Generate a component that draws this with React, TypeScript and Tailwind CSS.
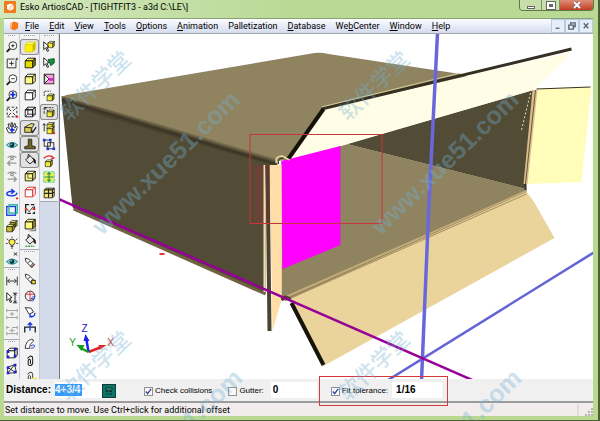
import React, { useState } from 'react';
import clsx from 'clsx';

interface Tool {
  label: string;
  icon: React.ReactNode;
  pressed?: boolean;
}

const Cube = ({ front = '#f4ec3a', top = '#fffb9a', side = '#a89c10', stroke = '#111', x = 0, y = 0, s = 1 }) => (
  <g transform={`translate(${x} ${y}) scale(${s})`} stroke={stroke} strokeLinejoin="round">
    <path d="M2.500 5.500 L5.500 2.500 H14 L11 5.500 Z" fill={top} />
    <path d="M11 5.500 L14 2.500 V10.500 L11 13.500 Z" fill={side} />
    <path d="M2.500 5.500 H11 V13.500 H2.500 Z" fill={front} />
  </g>
);

const Lens = ({ children }: { children?: React.ReactNode }) => (
  <g fill="none" stroke="#222">
    <circle cx="9" cy="6.500" r="4.500" fill="#fff" />
    <path d="M5.500 10 L2 13.500" strokeWidth="2.200" />
    {children}
  </g>
);

const Cursor = ({ x = 0, y = 0 }) => (
  <path
    transform={`translate(${x} ${y})`}
    d="M2 2 L8 7.500 L5.500 8 L7.500 12.500 L6 13 L4.200 9 L2 11 Z"
    fill="#fff"
    stroke="#111"
  />
);

const Pencil = ({ children }: { children?: React.ReactNode }) => (
  <g stroke="#222" fill="#fff">
    <path d="M2.500 2.500 L6.500 3.500 L13 10 L10 13 L3.500 6.500 Z" />
    <path d="M5.500 8 L8 5.500" fill="none" />
    <path d="M8.500 11.500 L11.500 8.500 L13 10 L10 13 Z" fill="#e9a0a0" />
    {children}
  </g>
);

const Eye = () => (
  <g>
    <path d="M1.500 8 Q8 2 14.500 8 Q8 14 1.500 8 Z" fill="#7fdde4" stroke="#167a88" />
    <circle cx="8" cy="8" r="2.800" fill="#10363c" />
    <circle cx="7" cy="7" r="0.800" fill="#fff" />
  </g>
);

const Bucket = () => (
  <g stroke="#111">
    <path d="M3 8 L8 3 L13 8 L8 12.500 Z" fill="#e8e8e8" />
    <path d="M8 3 L6 1.500 L5.500 6" fill="none" />
    <path d="M11 6 Q15 7 14 12 Q12 11 12.500 8.500" fill="#111" />
  </g>
);

const Corners = ({ color = '#2222cc' }) => (
  <g fill={color}>
    <rect x="2" y="5" width="3" height="3" />
    <rect x="10" y="2" width="3" height="3" />
    <rect x="2" y="11" width="3" height="3" />
    <rect x="10" y="10" width="3" height="3" />
  </g>
);

const viewTools: Tool[] = [
  { label: 'Zoom in', icon: <Lens><path d="M7 6.500 H11 M9 4.500 V8.500" /></Lens> },
  {
    label: 'Zoom to rectangle',
    icon: <g fill="none" stroke="#222"><path d="M11 3.500 H2.500 V13.500 H12.500 V5 M7.500 6 V11 M5 8.500 H10" /><path d="M12 3.500 H15 M13.500 2 V5" /></g>,
  },
  { label: 'Zoom out', icon: <Lens><path d="M7 6.500 H11" /></Lens> },
  {
    label: 'Zoom extents',
    icon: <Lens><path d="M9 3 V10 M6 6.500 H12" stroke="#1630e0" strokeWidth="2" /></Lens>,
  },
  {
    label: 'Fit to window',
    icon: (
      <g fill="none" stroke="#222">
        <rect x="2.500" y="2.500" width="11" height="11" strokeDasharray="3 2" />
        <path d="M4 4 L7 7 M12 4 L9 7 M4 12 L7 9 M12 12 L9 9" />
        <path d="M12 13.500 H15" stroke="#e22" strokeWidth="2" />
      </g>
    ),
  },
  {
    label: 'Pan',
    icon: (
      <g stroke="#222" fill="#fff">
        <path d="M4 13.500 L1.500 8 L3 7.500 L5 9 L3.500 3.500 L5 3 L7 7 V2 H8.500 L9 7 L11 2.500 L12.200 3.500 L11 8 L13.500 6 L14 7.500 L11.500 13.500 Z" />
        <path d="M8 7 V13 M5.500 10 H11" stroke="#1630e0" strokeWidth="2" />
      </g>
    ),
  },
  { label: 'View mode', icon: <Eye /> },
  {
    label: 'Previous view',
    icon: <g fill="none" stroke="#999" strokeWidth="1.500"><path d="M3 4 Q8 1 13 4" /><circle cx="8" cy="5" r="1.500" /><path d="M13 10.500 H3 M6 7.500 L3 10.500 L6 13.500" /></g>,
  },
  {
    label: 'Next view',
    icon: <g fill="none" stroke="#999" strokeWidth="1.500"><path d="M3 4 Q8 1 13 4" /><circle cx="8" cy="5" r="1.500" /><path d="M3 10.500 H13 M10 7.500 L13 10.500 L10 13.500" /></g>,
  },
  {
    label: 'Rotate view',
    icon: (
      <g fill="none" stroke="#1a38e0" strokeWidth="1.600">
        <path d="M10 5 Q2 4.500 2 8 Q3 10.500 9 10 Q14 9.500 13.500 6.500" />
        <path d="M7 2.500 L10.500 5 L7 7.500" />
        <path d="M12.500 13 H15" stroke="#e22" strokeWidth="2" />
      </g>
    ),
  },
  {
    label: 'Clipping plane',
    icon: (
      <g fill="none" strokeWidth="1.500">
        <rect x="2" y="4" width="10" height="10" stroke="#1a38e0" />
        <rect x="4.500" y="2" width="9.500" height="9.500" stroke="#1cb5a0" />
      </g>
    ),
  },
  { label: 'Stack', icon: <g><Cube x={4} y={0} s={0.7} front="#9c9430" /><Cube x={0} y={4.500} s={0.75} front="#c9bb35" /></g> },
  {
    label: 'Lights',
    icon: (
      <g stroke="#222" fill="#ffe948">
        <path d="M8 0.500 V2 M2 3 L4 5 M14 3 L12 5 M1 8.500 H3 M13 8.500 H15" />
        <path d="M8 3.500 Q12 3.500 11.500 7.500 L9.500 10.500 H6.500 L4.500 7.500 Q4 3.500 8 3.500 Z" />
        <path d="M6.500 12 H9.500 M7 13.800 H9" />
      </g>
    ),
  },
  { label: 'Hide', icon: <g><g transform="translate(0 3)"><Eye /></g><path d="M10 0.500 L14 4 M14 0.500 L10 4" stroke="#222" /></g> },
];

const dimensionTools: Tool[] = [
  { label: 'Distance dimension', icon: <path d="M2 3 V13 M14 3 V13 M3 8 H13 M5.500 5.500 L3 8 L5.500 10.500 M10.500 5.500 L13 8 L10.500 10.500" fill="none" stroke="#222" /> },
  { label: 'Select dimension', icon: <g><Cursor /><path d="M9 2.500 H14 M9 13.500 H14 M11.500 3 V13 M10 5 L11.500 3 L13 5 M10 11 L11.500 13 L13 11" fill="none" stroke="#222" /></g> },
  { label: 'Move dimension', icon: <path d="M2 4 H14 M2 12 H14 M2 2 V6 M14 2 V6 M2 10 V14 M14 10 V14 M8 5.500 V10.500 M5.500 8 H10.500" fill="none" stroke="#999" /> },
  { label: 'Extend dimension', icon: <path d="M2 4 H5 M8 4 H14 M2 11 H14 M2 2 V6 M14 2 V6 M2 9 V13 M14 9 V13 M5 7.500 H11 M8 5 V10" fill="none" stroke="#999" /> },
];

const selectTools: Tool[] = [
  { label: 'Select solid', icon: <g><Cube front="#fff" top="#fff" side="#ddd" /><Corners /></g> },
  { label: 'Select edges', icon: <g><path d="M3 6 L11 3 L13 12 L3 13 Z M3 6 L12 12 M11 3 L3 13" fill="none" stroke="#222" /><Corners /></g> },
  { label: 'Select part', icon: <path d="M3 5 L7 3 L9 6 L14 3 M3 5 V13" fill="none" stroke="#d22" strokeWidth="2" /> },
];

const modeTools: Tool[] = [
  { label: 'Solid', icon: <Cube stroke="#e0d400" front="#fff200" top="#fff980" side="#c0b400" />, pressed: true },
  { label: 'Solid with edges', icon: <Cube front="#e6dc00" top="#f8f25a" side="#8a8200" /> },
  { label: 'Hidden line', icon: <Cube front="#fffb80" top="#fffdb5" side="#fff27a" /> },
  { label: 'White solid', icon: <Cube front="#fff" top="#fff" side="#fff" /> },
  { label: 'Wireframe', icon: <g><Cube front="none" top="none" side="none" /><path d="M5.500 2.500 V10.500 H14 M5.500 10.500 L2.500 13.500" fill="none" stroke="#222" /></g> },
  {
    label: 'Open box',
    icon: (
      <g stroke="#222">
        <path d="M2 7 L9 3 L13 3.500 L10 8 Z" fill="#e9df68" />
        <path d="M2 7 L10 8 V13 H2 Z" fill="#d8cc50" />
        <path d="M9 10 L11 13 L15 7" fill="none" strokeWidth="1.500" />
      </g>
    ),
    pressed: true,
  },
  { label: 'Show thickness', icon: <path d="M6 2.500 H10 V10 L14 11 V13.500 H2 V11 L6 10 Z" fill="#6d6422" stroke="#222" />, pressed: true },
  { label: 'Fill', icon: <Bucket />, pressed: true },
  { label: 'Yellow wire', icon: <g><Cube front="#fffb80" top="#fffdb5" side="#fff27a" /><path d="M5.500 2.500 V10.500 H14" fill="none" stroke="#555" /></g> },
  { label: 'Red wire', icon: <g><Cube front="#fff" top="#fff" side="#fff" stroke="#d42020" /></g> },
  {
    label: 'Inside outside',
    icon: <g fill="none" stroke="#222"><path d="M3 3 H13 V13 H3 Z" strokeDasharray="4 2" strokeWidth="1.500" /><path d="M4 8 L7 11 L12 5" /><path d="M2 8 H5 M11 8 H14" stroke="#d22" strokeWidth="2" /></g>,
  },
  { label: 'Shadow', icon: <g><path d="M5 15 L15 15 V7 L13 13 Z" fill="#888" /><Cube y={-1} front="#fffb80" /></g> },
  { label: 'Paint', icon: <g><g transform="translate(0 -1)"><Bucket /></g><path d="M3 14 H13" stroke="#3ba43b" strokeWidth="1.500" strokeDasharray="2 1" /></g> },
];

const annotateTools: Tool[] = [
  { label: 'Draw', icon: <Pencil /> },
  { label: 'Draw on surface', icon: <Pencil><rect x="10" y="9.500" width="4" height="4" fill="#f5e629" /></Pencil> },
  { label: 'Globe', icon: <g fill="none" stroke="#222"><circle cx="8" cy="8" r="5.500" /><path d="M8 2.500 V13 M3 6 H13" stroke="#d22" /><path d="M9 12 Q10 8 14 9 M9 11 H13 L11 14" stroke="#1a38e0" /></g> },
  { label: 'Revolve', icon: <g fill="none" stroke="#222"><path d="M2.500 3 L9 3.500 L12 8 L7 10.500 Z" fill="#fff" /><path d="M8 13 Q14 14 13.500 9 M8 10 V13.500 H11" stroke="#1a38e0" strokeWidth="1.500" /></g> },
  { label: 'Extrude', icon: <g fill="none" stroke="#222" strokeWidth="1.500"><path d="M2 13 V7 H14 V13" /><path d="M8 11 V2 M5.500 4.500 L8 2 L10.500 4.500" stroke="#1a38e0" /></g> },
  { label: 'Sweep', icon: <g fill="none" stroke="#222"><path d="M2.500 13 Q3 4 10 2.500 Q13 3 11.500 5 Q7 8 7.500 13 Z" fill="#fff" /><path d="M9 10 Q12 8 13.500 10 Q13 13 9 13" stroke="#1a38e0" /></g> },
  { label: 'Attach', icon: <path d="M5 5 L8 2.500 Q11 2 11 5 V11 Q9 14.500 6 12.500 V7 Q7.500 5 8.500 7 V11" fill="none" stroke="#222" strokeWidth="1.200" /> },
  { label: 'Attach new', icon: <g><path d="M5 5 L8 2.500 Q11 2 11 5 V11 Q9 14.500 6 12.500 V7 Q7.500 5 8.500 7 V11" fill="none" stroke="#222" /><path d="M10 9 L15 14 M15 9 L10 14" stroke="#f2dc18" strokeWidth="2" /></g> },
];

const moveTools: Tool[] = [
  { label: 'Select item', icon: <g><Cube x={5} y={0} s={0.65} /><Cursor /></g> },
  { label: 'Select face', icon: <g><path d="M7 4 L14 3 V8 L10 11 Z" fill="#158b3d" stroke="#0c5a25" /><Cursor /></g> },
  { label: 'Designs', icon: <g><rect x="2.500" y="2.500" width="11" height="11" fill="#f4a3dd" stroke="#222" /><path d="M3 3 L8 8 L3 13 Z" fill="#eaf7e0" stroke="#222" /><rect x="8" y="7" width="5" height="3" fill="#e31bd0" /></g> },
  { label: 'Duplicate', icon: <g><path d="M2.500 8 V2.500 H10" fill="none" stroke="#222" strokeDasharray="2 1" /><Cube x={4} y={4} s={0.7} /></g> },
  { label: 'Move', icon: <g><path d="M2.500 10 V3 H13 M2.500 3 L7 7 M2.500 3 H5" fill="none" stroke="#222" strokeDasharray="3 1" /><Cube x={4} y={4} s={0.7} /></g>, pressed: true },
  { label: 'Move to point', icon: <g><Cube x={4} y={0} s={0.7} /><Cube x={4} y={5} s={0.7} /><path d="M2.500 3 V12 M1 5 L2.500 3 L4 5" fill="none" stroke="#222" /><path d="M12 14 H15" stroke="#d22" strokeWidth="2" /></g> },
  { label: 'Align', icon: <g fill="none" stroke="#222"><rect x="2.500" y="3.500" width="7" height="7" /><rect x="6.500" y="6.500" width="7" height="7" /><g fill="#1a38e0" stroke="none"><rect x="1" y="2" width="3" height="3" /><rect x="8" y="2" width="3" height="3" /><rect x="12" y="12" width="3" height="3" /><rect x="5" y="12" width="3" height="3" /></g></g> },
  { label: 'Rotate item', icon: <g><Cube x={2} y={5} s={0.7} /><path d="M2 5 Q7 0 13 4 M10 2 L13.500 4.500 L10 6" fill="none" stroke="#d22" strokeWidth="1.500" /></g> },
  { label: 'Scale', icon: <g><rect x="2" y="2" width="12" height="12" fill="#f2ec5a" stroke="#22c9c2" strokeDasharray="3 1" /><path d="M8 3 V13 M3 8 H13 M6 5 L8 3 L10 5 M6 11 L8 13 L10 11" fill="none" stroke="#168f4a" strokeWidth="1.200" /></g> },
  { label: 'Array', icon: <g fill="#f4ec70" stroke="#222"><path d="M2.500 4.500 L4.500 2.500 H14 V11.500 L12 13.500 H2.500 Z" /><path d="M7.500 3 V13 M2.500 8.500 H12 L14 7 M12 4.500 V13 M2.500 4.500 H12 L14 2.500" strokeWidth="1.300" fill="none" /></g> },
];

const Grip = () => <div className="mx-1 h-1 shrink-0 border-t border-dotted border-[#9ba7bd]" />;

const ToolGroup = ({ tools, className }: { tools: Tool[]; className?: string }) => (
  <div className="shrink-0 border-b border-[#a5a9b5] bg-[#f3f3f3] pt-px">
    <Grip />
    <div className={clsx('flex flex-col items-stretch justify-between', className)}>
      {tools.map(tool => (
        <button
          key={tool.label}
          type="button"
          aria-label={tool.label}
          aria-pressed={tool.pressed}
          className={clsx(
            'flex h-4 shrink-0 items-center justify-center',
            tool.pressed && 'rounded-[3px] bg-[#e2e2e2] ring-1 ring-inset ring-[#8c8c8c]'
          )}
        >
          <svg viewBox="0 0 16 16" className="size-3.5" aria-hidden="true">
            {tool.icon}
          </svg>
        </button>
      ))}
    </div>
  </div>
);

const menus = [
  ['', 'F', 'ile'],
  ['', 'E', 'dit'],
  ['', 'V', 'iew'],
  ['', 'T', 'ools'],
  ['', 'O', 'ptions'],
  ['', 'A', 'nimation'],
  ['Palletization', '', ''],
  ['', 'D', 'atabase'],
  ['We', 'b', 'Center'],
  ['', 'W', 'indow'],
  ['', 'H', 'elp'],
];

const Logo = ({ className }: { className?: string }) => (
  <svg viewBox="0 0 12 12" className={className} aria-hidden="true">
    <rect width="12" height="12" rx="1" fill="#f47a1c" />
    <path d="M3 4 L6.500 2.500 L9.500 4 V8 L6 9.800 L3 8 Z" fill="#fff" />
    <path d="M6 6 L9 4.500 M6 6 V9" stroke="#f9b27c" fill="none" />
  </svg>
);

const MdiLogo = () => (
  <svg viewBox="0 0 12 12" className="size-2.5" aria-hidden="true">
    <path d="M1.500 3 L6 0.500 L11 2.500 V8.500 L6.500 11.500 L1.500 9 Z" fill="#f47a1c" />
    <path d="M1.500 3 L4 2 L3 8 L1.500 9 Z" fill="#ffc18f" />
  </svg>
);

const Scene = () => (
  <svg
    viewBox="59 34 534 345"
    preserveAspectRatio="xMidYMid slice"
    className="size-full"
    role="img"
    aria-label="Folded box with tight fit flap"
  >
    <defs>
      <linearGradient id="ridge" gradientUnits="userSpaceOnUse" x1="168" y1="126" x2="165" y2="136">
        <stop offset="0" stopColor="#8f8360" />
        <stop offset="0.500" stopColor="#3b3424" />
        <stop offset="1" stopColor="#524b36" />
      </linearGradient>
      <linearGradient id="shade" x1="0" x2="1" y1="0" y2="0">
        <stop offset="0" stopColor="#524b36" />
        <stop offset="0.500" stopColor="#6b4238" />
        <stop offset="1" stopColor="#6b4238" />
      </linearGradient>
    </defs>
    <path d="M61 97 L66 95 L314 53 Q320 52 328 54 L460 74 L470 78 L323 112 L287 160 L276 161 Z" fill="#8f8360" />
    <path d="M61 99 L277 161 V165 H265 V294 L75 211 L72 207 Z" fill="#524b36" />
    <path d="M61 96 L275 157 L275 166 L62 105 Z" fill="url(#ridge)" />
    <path d="M73 209 L265 294" stroke="#716342" strokeWidth="3" />
    <path d="M346 144 L533 90 L525 189 Z" fill="#524b36" />
    <path d="M281 161 L347 144 L526 189 L526 193 L290 300 H281 Z" fill="#8f8360" />
    <path d="M288 299 L526 192 L533 201 L554 238 L323 366 Z" fill="#ead49c" />
    <path d="M283 298 L526 191" stroke="#c4ab76" strokeWidth="2" />
    <path d="M284 301 L526 194" stroke="#a38c5d" />
    <path d="M536 89 L591 87 L581 182 L527 184 Z" fill="#fffdb9" />
    <path d="M532 90 H537 L527 184 H523 Z" fill="#d9bd8b" />
    <path d="M535 90 L525 184" stroke="#685a40" />
    <path d="M536 89 L590 87" stroke="#38311f" />
    <path d="M530 93 L521 130" stroke="#e9e0ad" strokeDasharray="2 2" />
    <path d="M525 184 V190" stroke="#38311f" strokeWidth="2" />
    <path d="M285 161 L323 109 L568 53 L568 57 L533 90 L320 152 Z" fill="#fffde6" />
    <path d="M321 109 L571 49" stroke="#363022" strokeWidth="3" />
    <path d="M287 160 L323 109" stroke="#151309" strokeWidth="4" />
    <path d="M321 107 L460 73" stroke="#d6cc9a" strokeWidth="1" />
    <path d="M281 161 L340 146 V245 L282 269 Z" fill="#ff00ff" />
    <path d="M250 165 H263 V224 H250 Z" fill="url(#shade)" />
    <path d="M269 165 H281 V300 L272 331 Z" fill="#ffdda6" />
    <path d="M263 165 H265 V292 H263 Z" fill="#f4dcaa" />
    <path d="M265 165 H269 L271 331 H267 Z" fill="#4b4230" />
    <path d="M265 165 H269 V224 H266 Z" fill="#5f3a31" />
    <path d="M276 163 Q274 156 282 156 L289 160" fill="none" stroke="#e7dca8" strokeWidth="1.500" />
    <path d="M278 164 Q277 158 283 158" fill="none" stroke="#2b2516" />
    <path d="M281 300 L285 297 L290 299" fill="none" stroke="#4b4230" strokeWidth="3" />
    <path d="M291 303 L323 365" stroke="#17140a" strokeWidth="4" />
    <path d="M437 33 L428 214 L421 381" fill="none" stroke="#6868dc" strokeWidth="3.500" />
    <path d="M594 252 L386 381" stroke="#6464d6" strokeWidth="2.500" />
    <path d="M58 199 L474 381" stroke="#960096" strokeWidth="2.500" />
    <rect x="249.500" y="134.500" width="132" height="89" fill="none" stroke="#c8353b" />
    <rect x="159" y="253" width="5" height="2" fill="#e33a3a" />
    <g strokeWidth="2.500">
      <path d="M88 352 L101 347" stroke="#dd2222" />
      <path d="M98 345 L106 345 L99 350 Z" fill="#dd2222" />
      <path d="M88 352 L86 340" stroke="#2020ee" />
      <path d="M83 341 L85 334 L89 341 Z" fill="#2020ee" />
      <path d="M88 352 L80 348" stroke="#12a012" />
      <path d="M76 345 L84 345 L81 351 Z" fill="#12a012" />
    </g>
    <g className="font-['Liberation_Sans',sans-serif] text-[10px]" textAnchor="middle">
      <text x="110" y="346" fill="#dd2222">X</text>
      <text x="84" y="332" fill="#2020cc">Z</text>
      <text x="72" y="346" fill="#12a012">Y</text>
    </g>
  </svg>
);

const Mark = ({ x, y, text, className }: { x: number; y: number; text: string; className: string }) => (
  <text transform={`translate(${x} ${y}) rotate(-44)`} className={className}>{text}</text>
);

const hanzi = 'text-[22px] font-medium';
const address = 'text-[25px] font-bold';

const CheckOption = ({ label, defaultChecked = false }: { label: string; defaultChecked?: boolean }) => {
  const [checked, setChecked] = useState(defaultChecked);
  return (
    <label className="flex items-center gap-0.5 pt-0.5 text-[8px] leading-3 whitespace-nowrap">
      <span className="grid size-[9px] place-items-center border border-[#8e9297] bg-[#f8f8f8]">
        <input
          type="checkbox"
          checked={checked}
          onChange={e => setChecked(e.target.checked)}
          className="peer col-start-1 row-start-1 size-full appearance-none"
        />
        <svg viewBox="0 0 8 8" className="pointer-events-none invisible col-start-1 row-start-1 size-[7px] peer-checked:visible" aria-hidden="true">
          <path d="M1 4 L3 6.500 L7 1" fill="none" stroke="#33459a" strokeWidth="1.500" />
        </svg>
      </span>
      {label}
    </label>
  );
};

const fieldClass = 'h-4 min-w-0 bg-white text-[10px] font-bold leading-4 outline-none';

export default function App() {
  return (
    <div className="relative flex h-screen flex-col overflow-hidden border-r-2 border-b border-[#4c5f39] bg-[#b8d98f] font-['Liberation_Sans',sans-serif] text-black">
      <header className="flex h-[18px] shrink-0 items-start justify-between bg-linear-to-r from-[#d4e8bd] via-[#b9d995] to-[#b9d995] pl-1">
        <h1 className="flex items-center gap-1 pt-px font-['Roboto',sans-serif] text-[9px] leading-3">
          <Logo className="size-3" />
          Esko ArtiosCAD - [TIGHTFIT3 - a3d C:\LE\]
        </h1>
        <div className="mr-1 flex h-[11px] overflow-hidden rounded-b-sm border border-t-0 border-[#61794a]">
          <button type="button" aria-label="Minimize" className="grid w-[22px] place-items-center border-r border-[#7c9463] bg-[#c6dfab]">
            <span className="mt-1 h-[3px] w-2 border border-[#666] bg-white" />
          </button>
          <button type="button" aria-label="Maximize" className="grid w-[18px] place-items-center border-r border-[#7c9463] bg-[#c6dfab]">
            <span className="h-[7px] w-2 border-2 border-white bg-[#666] ring-1 ring-[#666]" />
          </button>
          <button type="button" aria-label="Close" className="grid w-[33px] place-items-center bg-linear-to-b from-[#de8c78] to-[#c13b1c]">
            <svg viewBox="0 0 10 8" className="h-2 w-2.5" aria-hidden="true">
              <path d="M2 1 L8 7 M8 1 L2 7" stroke="#666" strokeWidth="3" />
              <path d="M2 1 L8 7 M8 1 L2 7" stroke="#fff" strokeWidth="1.800" />
            </svg>
          </button>
        </div>
      </header>

      <div className="mr-[5px] mb-1 ml-1 flex min-h-0 flex-1 flex-col bg-[#f0f0f0]">
        <nav className="flex h-[15px] shrink-0 items-center border-t border-[#8ba374] bg-linear-to-b from-[#fbfcfe] to-[#d5dcef] pl-[5px] font-['Roboto',sans-serif] text-[9px] leading-3">
          <MdiLogo />
          <div className="ml-1.5 flex flex-1 gap-2.5">
            {menus.map(([before, key, after]) => (
              <button key={before + key + after} type="button">
                {before}
                <span className="underline">{key}</span>
                {after}
              </button>
            ))}
          </div>
          <div className="flex h-full">
            {[
              ['Minimize drawing', 'M3 8 H7'],
              ['Restore drawing', 'M4 4 V2 H9 V6 H7 M2 4.500 H7 V9 H2 Z'],
              ['Close drawing', 'M3 2.500 L8 8 M8 2.500 L3 8'],
            ].map(([label, d]) => (
              <button key={label} type="button" aria-label={label} className="grid w-3.5 place-items-center border border-[#b9cbe0] bg-[#e4edf8]">
                <svg viewBox="0 0 11 11" className="size-2.5" aria-hidden="true">
                  <path d={d} fill="none" stroke="#5c6470" strokeWidth="1.500" />
                </svg>
              </button>
            ))}
          </div>
        </nav>

        <main className="flex min-h-0 flex-1 border-t border-[#a3a7ac]">
          <aside className="flex w-[55px] shrink-0 bg-[#d3daea]">
            <div className="flex w-4 flex-col overflow-hidden border-r border-[#c5c9d2] bg-[#f3f3f3]">
              <ToolGroup tools={viewTools} className="h-[228px]" />
              <ToolGroup tools={dimensionTools} className="h-[66px]" />
              <ToolGroup tools={selectTools} className="h-12" />
            </div>
            <div className="flex w-5 flex-col overflow-hidden border-r border-[#c5c9d2] bg-[#f3f3f3]">
              <ToolGroup tools={modeTools} className="h-[210px]" />
              <ToolGroup tools={annotateTools} className="h-[130px]" />
            </div>
            <div className="w-[18px]">
              <ToolGroup tools={moveTools} className="h-[162px]" />
            </div>
          </aside>
          <div className="min-w-0 flex-1 overflow-hidden border-l border-[#777] bg-white">
            <Scene />
          </div>
        </main>

        <form className="flex h-[22px] shrink-0 items-center pl-0.5">
          <label htmlFor="distance" className="text-[10px] leading-4 font-bold">Distance:</label>
          <div className="ml-1 flex h-4 w-12 items-center bg-white">
            <input id="distance" defaultValue="4+3/4" className="h-3 w-[27px] bg-[#3399ff] text-[10px] leading-3 font-bold text-white outline-none" />
          </div>
          <button type="button" aria-label="Calculator" className="mt-0.5 size-3 bg-[#0a7468] ring-1 ring-[#173b37]">
            <svg viewBox="0 0 12 12" aria-hidden="true">
              <path d="M3 3 H9 V5 H3 Z M3 6.500 H5 M6 6.500 H9 M3 9 H5 M6 9 H9" stroke="#062e2a" fill="#4bc2ae" />
            </svg>
          </button>
          <div className="ml-[29px]"><CheckOption label="Check collisions" defaultChecked /></div>
          <div className="ml-4"><CheckOption label="Gutter:" /></div>
          <input aria-label="Gutter value" defaultValue="0" className={clsx(fieldClass, 'ml-[7px] w-[46px] pl-0.5')} />
          <div className="relative ml-3.5 flex items-center">
            <CheckOption label="Fit tolerance:" defaultChecked />
            <input aria-label="Fit tolerance value" defaultValue="1/16" className={clsx(fieldClass, 'ml-1 w-[50px] pl-1')} />
            <span className="pointer-events-none absolute -top-1.5 -right-1.5 -bottom-2 -left-3 border border-[#d23a3f]" />
          </div>
        </form>

        <footer className="flex h-[15px] shrink-0 items-center justify-between border-t-2 border-[#9b9b9b] bg-[#f1edec] pl-px font-['Roboto',sans-serif] text-[9px] leading-3">
          <p>Set distance to move. Use Ctrl+click for additional offset</p>
          <svg viewBox="0 0 16 12" className="h-3 w-4" aria-hidden="true">
            <path d="M1 0 V12" stroke="#d0cccb" />
            <path d="M8 11 H10 M11 11 H13 M14 11 H16 M11 8 H13 M14 8 H16 M14 5 H16" stroke="#b6b2b1" strokeWidth="2" />
          </svg>
        </footer>
      </div>

      <svg
        className="pointer-events-none absolute inset-0 size-full fill-[#73b3d4] font-['Liberation_Sans','Noto_Sans_CJK_SC',sans-serif] opacity-35"
        aria-hidden="true"
      >
        <Mark x={69} y={122} text="软件学堂" className={hanzi} />
        <Mark x={348} y={122} text="软件学堂" className={hanzi} />
        <Mark x={69} y={402} text="软件学堂" className={hanzi} />
        <Mark x={348} y={402} text="软件学堂" className={hanzi} />
        <Mark x={102} y={236} text="www.xue51.com" className={address} />
        <Mark x={381} y={236} text="www.xue51.com" className={address} />
        <Mark x={192} y={430} text="1.com" className={address} />
        <Mark x={471} y={430} text="1.com" className={address} />
      </svg>
    </div>
  );
}
